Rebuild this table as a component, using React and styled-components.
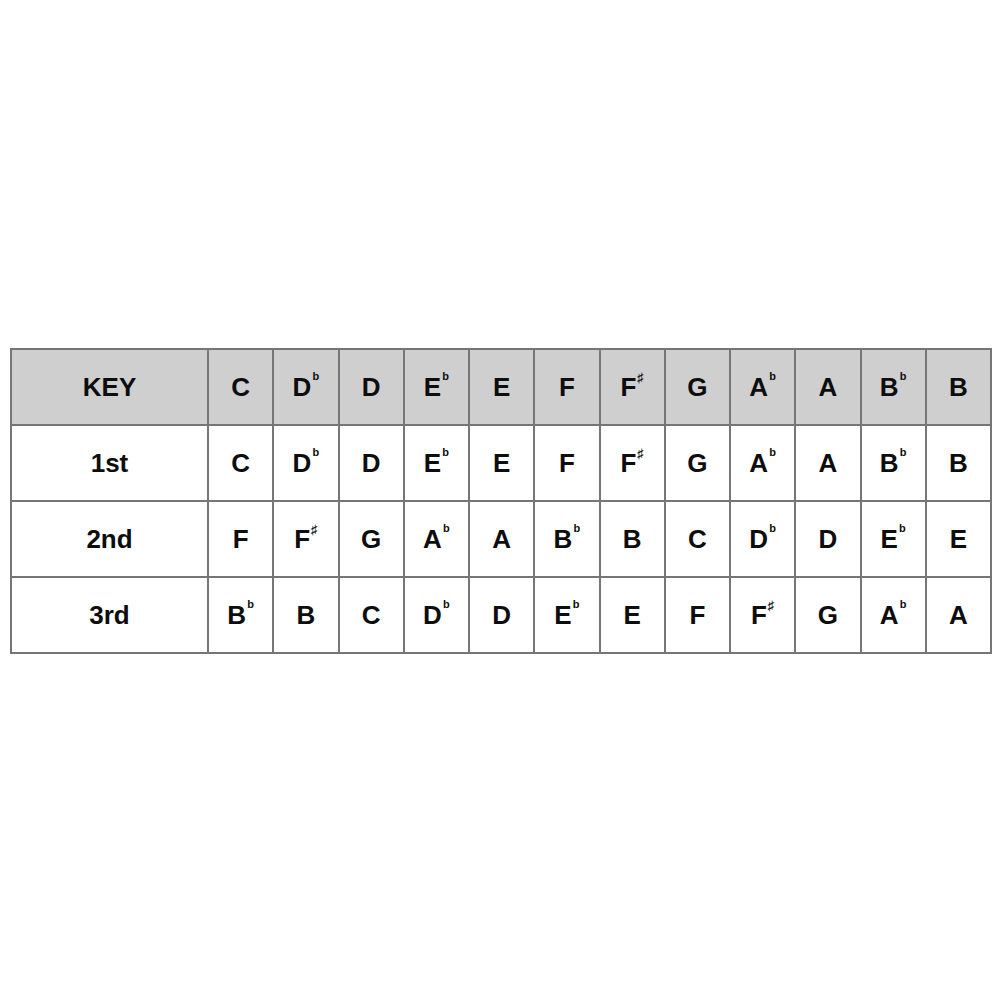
import React from 'react';
import styled, { createGlobalStyle } from 'styled-components';

const GlobalStyle = createGlobalStyle`
  html, body {
    margin: 0;
    padding: 0;
    background: #ffffff;
  }
`;

const Page = styled.div`
  width: 1000px;
  height: 1000px;
  box-sizing: border-box;
  padding: 348px 0 0 10px;
  font-family: "Liberation Sans", Arial, sans-serif;
`;

const Grid = styled.div`
  display: grid;
  grid-template-columns: 195px repeat(12, 1fr);
  grid-auto-rows: 74px;
  gap: 2px;
  padding: 2px;
  width: 982px;
  box-sizing: border-box;
  background: #767676;
`;

const Cell = styled.div`
  display: flex;
  align-items: center;
  justify-content: center;
  background: ${(p) => (p.$head ? '#cfcfcf' : '#ffffff')};
  color: #0d0d0d;
  font-weight: 700;
  font-size: 26px;
`;

const Note = styled.span`
  display: inline-flex;
  align-items: flex-start;
`;

const Accidental = styled.sup`
  font-size: ${(p) => (p.$sharp ? '13px' : '11px')};
  font-weight: 700;
  line-height: 1;
  margin-left: 1px;
  margin-top: -1px;
  vertical-align: top;
`;

const header = ['C', 'Db', 'D', 'Eb', 'E', 'F', 'F#', 'G', 'Ab', 'A', 'Bb', 'B'];

const rows = [
  { label: '1st', notes: ['C', 'Db', 'D', 'Eb', 'E', 'F', 'F#', 'G', 'Ab', 'A', 'Bb', 'B'] },
  { label: '2nd', notes: ['F', 'F#', 'G', 'Ab', 'A', 'Bb', 'B', 'C', 'Db', 'D', 'Eb', 'E'] },
  { label: '3rd', notes: ['Bb', 'B', 'C', 'Db', 'D', 'Eb', 'E', 'F', 'F#', 'G', 'Ab', 'A'] },
];

function NoteName({ name }) {
  const letter = name[0];
  const acc = name[1];
  return (
    <Note>
      {letter}
      {acc && (
        <Accidental $sharp={acc === '#'}>{acc === '#' ? '♯' : 'b'}</Accidental>
      )}
    </Note>
  );
}

export default function App() {
  return (
    <Page>
      <GlobalStyle />
      <Grid>
        <Cell $head>KEY</Cell>
        {header.map((n, i) => (
          <Cell $head key={'h' + i}>
            <NoteName name={n} />
          </Cell>
        ))}
        {rows.map((row) => (
          <React.Fragment key={row.label}>
            <Cell>{row.label}</Cell>
            {row.notes.map((n, i) => (
              <Cell key={row.label + i}>
                <NoteName name={n} />
              </Cell>
            ))}
          </React.Fragment>
        ))}
      </Grid>
    </Page>
  );
}
